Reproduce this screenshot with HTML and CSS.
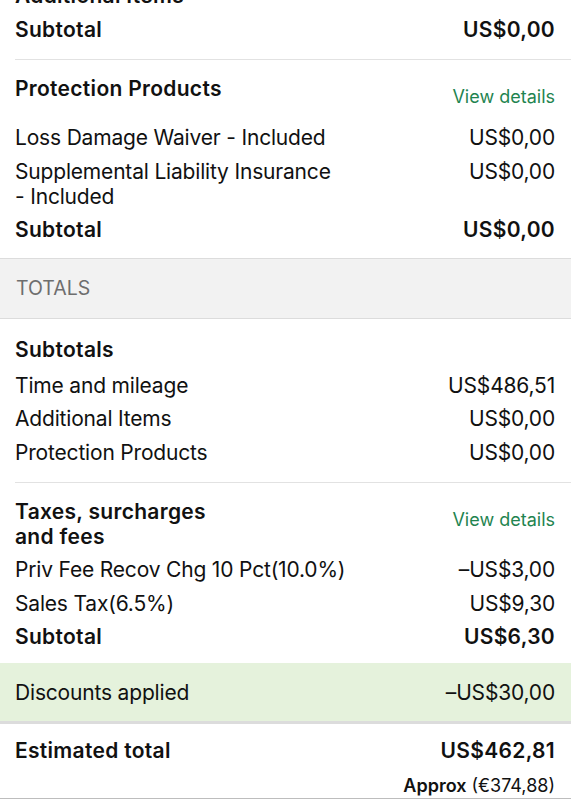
FILE: index.html
```html
<!DOCTYPE html>
<html>
<head>
<meta charset="utf-8">
<link rel="stylesheet" href="styles.css">
</head>
<body>
<div class="page">
  <section class="group group-first">
    <div class="inner">
      <div class="head-row"><div class="head">Additional Items</div></div>
      <div class="row strong"><span>Subtotal</span><span>US$0,00</span></div>
    </div>
  </section>

  <section class="group group-before-band">
    <div class="inner">
      <div class="head-row">
        <div class="head">Protection Products</div>
        <a class="link">View details</a>
      </div>
      <div class="row"><span class="label">Loss Damage Waiver - Included</span><span>US$0,00</span></div>
      <div class="row"><span class="label">Supplemental Liability Insurance<br>- Included</span><span>US$0,00</span></div>
      <div class="row strong"><span>Subtotal</span><span>US$0,00</span></div>
    </div>
  </section>

  <div class="band">TOTALS</div>

  <section class="group group-after-band">
    <div class="inner">
      <div class="head-row plain"><div class="head">Subtotals</div></div>
      <div class="row"><span>Time and mileage</span><span>US$486,51</span></div>
      <div class="row"><span>Additional Items</span><span>US$0,00</span></div>
      <div class="row"><span>Protection Products</span><span>US$0,00</span></div>
    </div>
  </section>

  <section class="group group-last">
    <div class="inner">
      <div class="head-row">
        <div class="head">Taxes, surcharges<br>and fees</div>
        <a class="link">View details</a>
      </div>
      <div class="row"><span>Priv Fee Recov Chg 10 Pct(10.0%)</span><span>–US$3,00</span></div>
      <div class="row"><span>Sales Tax(6.5%)</span><span>US$9,30</span></div>
      <div class="row strong"><span>Subtotal</span><span>US$6,30</span></div>
    </div>
  </section>

  <div class="discount">
    <span>Discounts applied</span><span>–US$30,00</span>
  </div>

  <div class="total">
    <div class="row strong"><span>Estimated total</span><span>US$462,81</span></div>
    <div class="approx"><b>Approx</b> (€374,88)</div>
  </div>
</div>
</body>
</html>
```

FILE: styles.css
```css
* { box-sizing: border-box; }
html, body { margin: 0; padding: 0; background: #fff; }
body {
  font-family: Inter, "Noto Sans", sans-serif;
  color: #111;
  font-size: 21px;
  line-height: 25px;
  letter-spacing: -0.18px;
}
.page { margin-top: -17px; overflow: hidden; }

.group { padding-left: 15px; }
.inner {
  border-bottom: 1px solid #e2e2e2;
  padding: 16px 16px 17px 0;
  display: flex;
  flex-direction: column;
  gap: 8.5px;
}
.group-first .inner { padding-top: 0; }
.group-before-band .inner { border-bottom: none; padding-bottom: 16px; }
.group-after-band .inner { padding-top: 18px; }
.group-last .inner { border-bottom: none; padding-bottom: 14px; }

.head-row { display: flex; justify-content: space-between; align-items: flex-start; }
.head { font-weight: 600; letter-spacing: 0.3px; }
.plain { margin-bottom: 2px; }
.link {
  color: #1f8450;
  font-size: 18px;
  padding: 8px 0;
  line-height: 25px;
  letter-spacing: 0;
}

.row { display: flex; justify-content: space-between; align-items: flex-start; }
.row > span:last-child { text-align: right; white-space: nowrap; }
.strong { font-weight: 600; letter-spacing: 0.3px; }

.band {
  background: #f2f2f2;
  border-top: 1px solid #dcdcdc;
  border-bottom: 1px solid #dcdcdc;
  height: 61px;
  padding-left: 16px;
  display: flex;
  align-items: center;
  color: #6e6e6e;
  font-size: 19.5px;
  letter-spacing: 0;
}

.discount {
  background: #e5f2dc;
  border-bottom: 3px solid #dcdcdc;
  height: 61px;
  padding: 0 16px 0 15px;
  display: flex;
  justify-content: space-between;
  align-items: center;
}

.total {
  padding: 14px 16px 2px 15px;
  border-bottom: 1px solid #bdbdbd;
}
.approx {
  text-align: right;
  font-size: 18px;
  line-height: 20px;
  margin-top: 12.5px;
  letter-spacing: 0;
}
.approx b { font-weight: 600; }
```
